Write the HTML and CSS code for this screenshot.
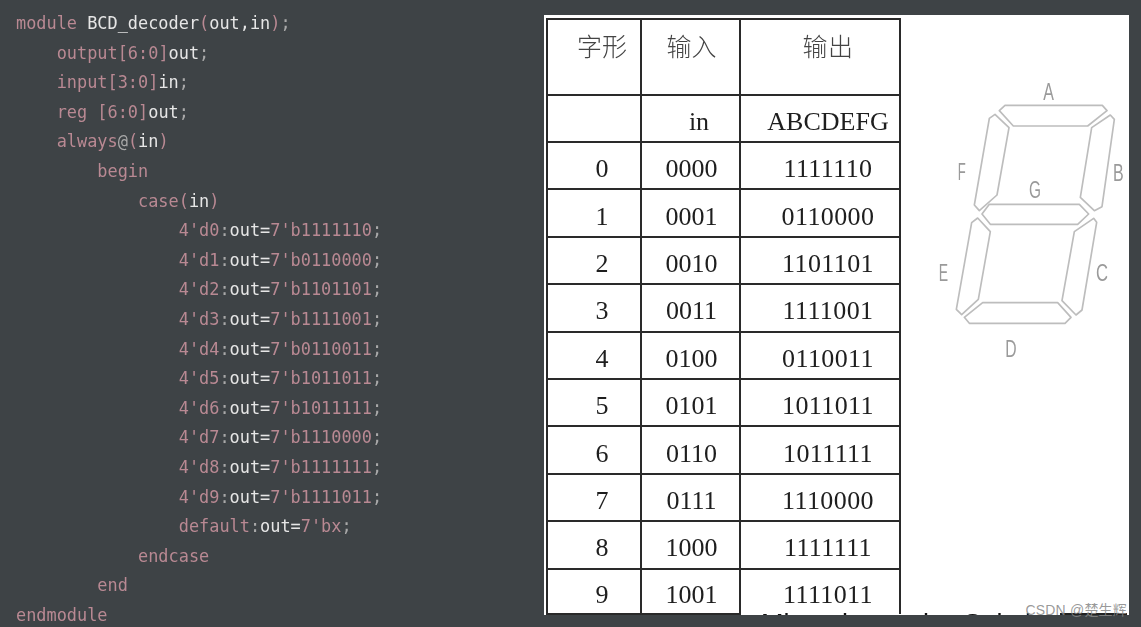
FILE: index.html
```
<!DOCTYPE html>
<html lang="zh">
<head>
<meta charset="utf-8">
<title>BCD decoder</title>
<link rel="stylesheet" href="styles.css">
</head>
<body>
<main class="page">
<pre class="code"><span class="k">module</span> <span class="v">BCD_decoder</span><span class="k">(</span><span class="v">out,in</span><span class="k">)</span><span class="p">;</span>
    <span class="k">output[6:0]</span><span class="v">out</span><span class="p">;</span>
    <span class="k">input[3:0]</span><span class="v">in</span><span class="p">;</span>
    <span class="k">reg [6:0]</span><span class="v">out</span><span class="p">;</span>
    <span class="k">always</span><span class="p">@</span><span class="k">(</span><span class="v">in</span><span class="k">)</span>
        <span class="k">begin</span>
            <span class="k">case(</span><span class="v">in</span><span class="k">)</span>
                <span class="k">4'd0</span><span class="p">:</span><span class="v">out=</span><span class="k">7'b1111110</span><span class="p">;</span>
                <span class="k">4'd1</span><span class="p">:</span><span class="v">out=</span><span class="k">7'b0110000</span><span class="p">;</span>
                <span class="k">4'd2</span><span class="p">:</span><span class="v">out=</span><span class="k">7'b1101101</span><span class="p">;</span>
                <span class="k">4'd3</span><span class="p">:</span><span class="v">out=</span><span class="k">7'b1111001</span><span class="p">;</span>
                <span class="k">4'd4</span><span class="p">:</span><span class="v">out=</span><span class="k">7'b0110011</span><span class="p">;</span>
                <span class="k">4'd5</span><span class="p">:</span><span class="v">out=</span><span class="k">7'b1011011</span><span class="p">;</span>
                <span class="k">4'd6</span><span class="p">:</span><span class="v">out=</span><span class="k">7'b1011111</span><span class="p">;</span>
                <span class="k">4'd7</span><span class="p">:</span><span class="v">out=</span><span class="k">7'b1110000</span><span class="p">;</span>
                <span class="k">4'd8</span><span class="p">:</span><span class="v">out=</span><span class="k">7'b1111111</span><span class="p">;</span>
                <span class="k">4'd9</span><span class="p">:</span><span class="v">out=</span><span class="k">7'b1111011</span><span class="p">;</span>
                <span class="k">default</span><span class="p">:</span><span class="v">out=</span><span class="k">7'bx</span><span class="p">;</span>
            <span class="k">endcase</span>
        <span class="k">end</span>
<span class="k">endmodule</span></pre>
<section class="figure">
<table class="truth">
<tr class="head"><th class="c1">字形</th><th class="c2">输入</th><th class="c3">输出</th></tr>
<tr class="sub"><td class="c1"></td><td class="c2 in">in</td><td class="c3">ABCDEFG</td></tr>
<tr><td class="c1">0</td><td class="c2">0000</td><td class="c3">1111110</td></tr>
<tr><td class="c1">1</td><td class="c2">0001</td><td class="c3">0110000</td></tr>
<tr><td class="c1">2</td><td class="c2">0010</td><td class="c3">1101101</td></tr>
<tr><td class="c1">3</td><td class="c2">0011</td><td class="c3">1111001</td></tr>
<tr><td class="c1">4</td><td class="c2">0100</td><td class="c3">0110011</td></tr>
<tr><td class="c1">5</td><td class="c2">0101</td><td class="c3">1011011</td></tr>
<tr><td class="c1">6</td><td class="c2">0110</td><td class="c3">1011111</td></tr>
<tr><td class="c1">7</td><td class="c2">0111</td><td class="c3">1110000</td></tr>
<tr><td class="c1">8</td><td class="c2">1000</td><td class="c3">1111111</td></tr>
<tr class="last"><td class="c1">9</td><td class="c2">1001</td><td class="c3">1111011</td></tr>
</table>
<svg class="digit" viewBox="0 0 687 930" width="229" height="310" aria-label="seven segment display">
<g class="seg">
<polygon points="295,152 312,136 604,136 618,152 560,198 337,198"/>
<polygon points="572,203 628,165 640,178 603,440 580,452 538,412"/>
<polygon points="520,515 578,475 587,487 543,750 525,765 483,722"/>
<polygon points="190,772 245,728 470,728 510,772 492,790 205,790"/>
<polygon points="212,488 230,474 268,515 232,718 182,764 166,748"/>
<polygon points="265,175 282,163 324,203 288,405 235,452 220,435"/>
<polygon points="243,462 265,433 535,433 563,462 530,493 268,493"/>
</g>
<g class="lab">
<text x="427" y="120" textLength="32" lengthAdjust="spacingAndGlyphs">A</text>
<text x="636" y="362" textLength="32" lengthAdjust="spacingAndGlyphs">B</text>
<text x="585" y="662" textLength="36" lengthAdjust="spacingAndGlyphs">C</text>
<text x="313" y="890" textLength="34" lengthAdjust="spacingAndGlyphs">D</text>
<text x="113" y="664" textLength="28" lengthAdjust="spacingAndGlyphs">E</text>
<text x="170" y="360" textLength="24" lengthAdjust="spacingAndGlyphs">F</text>
<text x="384" y="414" textLength="36" lengthAdjust="spacingAndGlyphs">G</text>
</g>
</svg>
<p class="stub">Microelectronics Solutions</p>
</section>
<span class="mark">CSDN @楚生辉</span>
</main>
</body>
</html>
```
FILE: styles.css
```
html, body {
  margin: 0;
  height: 100%;
  background: #3e4346;
}
.page {
  position: relative;
  display: flex;
  width: 1141px;
  height: 627px;
  overflow: hidden;
  background: #3e4346;
}
.code {
  flex: 0 0 544px;
  margin: 0;
  padding: 9px 0 0 16px;
  box-sizing: border-box;
  font: 16.9px/29.6px "DejaVu Sans Mono", monospace;
  filter: blur(0.35px);
}
.k { color: #b98993; }
.v { color: #e6e6e6; }
.p { color: #a9a9a9; }
.figure {
  position: relative;
  display: flex;
  align-items: flex-start;
  width: 585px;
  height: 599.5px;
  margin-top: 15px;
  padding: 3px 0 0 2px;
  box-sizing: border-box;
  overflow: hidden;
  background: #fff;
  filter: blur(0.5px);
}
.figure::after {
  content: "";
  position: absolute;
  left: 516px;
  width: 67px;
  bottom: 0;
  height: 1.5px;
  background: #222;
}
.truth {
  flex: none;
  width: 353px;
  table-layout: fixed;
  border-collapse: collapse;
  font: 26px/1 "Liberation Serif", "Noto Sans CJK SC", serif;
  color: #1e1e1e;
}
.truth th, .truth td {
  box-sizing: border-box;
  padding: 7px 0 0;
  border: 2px solid #2a2a2a;
  font-weight: 400;
  text-align: center;
  vertical-align: middle;
}
.truth tr { height: 47.4px; }
.truth .head { height: 76px; }
.truth .sub { height: 47px; }
.truth .last { height: 45px; }
.truth .last .c3 { border-bottom: 0; }
.truth th {
  padding: 0 0 24px;
  font: 300 25px/1 "Noto Sans CJK SC", sans-serif;
  color: #444;
}
.truth .c1 { width: 94px; padding-left: 16px; }
.truth .c2 { width: 99px; padding-left: 2px; }
.truth .c3 { width: 160px; padding-left: 16px; letter-spacing: 0.4px; }
.truth .sub .c3 { letter-spacing: 0; }
.truth .in { padding-left: 17px; }
.digit {
  flex: none;
  margin-top: 42px;
}
.seg polygon {
  fill: none;
  stroke: #bdbdbd;
  stroke-width: 5;
  stroke-linejoin: round;
}
.lab text {
  font: 74px "Liberation Sans", sans-serif;
  fill: #9a9a9a;
}
.stub {
  position: absolute;
  left: 217px;
  top: 594px;
  margin: 0;
  font: 27px "Liberation Sans", sans-serif;
  color: #111;
  white-space: nowrap;
}
.mark {
  position: absolute;
  right: 14px;
  top: 599px;
  font: 14px "Liberation Sans", "Noto Sans CJK SC", sans-serif;
  color: rgba(135, 135, 135, 0.85);
  letter-spacing: 0.2px;
}
```
